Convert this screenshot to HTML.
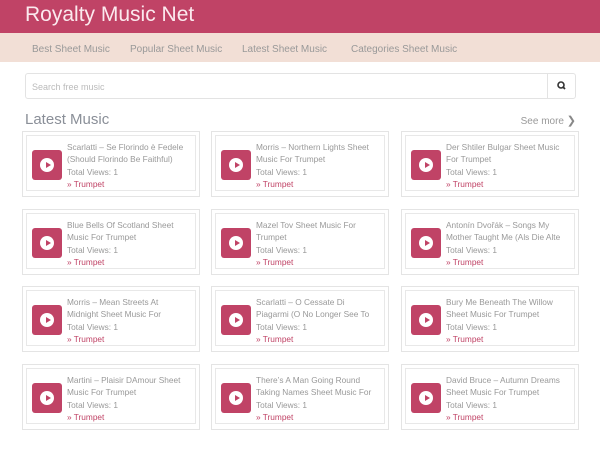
<!DOCTYPE html>
<html><head><meta charset="utf-8"><style>
*{box-sizing:border-box;margin:0;padding:0}
body{width:600px;height:450px;overflow:hidden;background:#fff;font-family:"Liberation Sans",sans-serif;font-weight:300}
.hdr{height:33px;background:#c04366;color:#fbe9ee;font-size:21px;padding:3px 0 0 25px}
.nav{height:29px;background:#f2dfd6;font-size:10px;color:#999;padding-top:11px}
.nav span{position:absolute}
.search{position:absolute;left:25px;top:73px;width:551px;height:26px;border:1px solid #e3e3e3;border-radius:3px;font-size:9px;color:#bbb;padding:8px 6px}
.search .b{position:absolute;right:0;top:0;width:28px;height:24px;border-left:1px solid #e3e3e3}
h2{position:absolute;left:25px;top:111px;font-size:15px;font-weight:normal;color:#8a8f98}
.more{position:absolute;right:24px;top:114px;font-size:10px;color:#999}
.more b{color:#888;font-size:11px}
.card{position:absolute;width:178px;height:66px;border:1px solid #e4e4e4}
.in{position:absolute;left:3px;top:3px;right:3px;bottom:5px;border:1px solid #e8e8e8}
.ic{position:absolute;left:5px;top:14px;width:30px;height:30px;background:#c04366;border-radius:3px}
.ic:after{content:"";position:absolute;left:8px;top:8px;width:14px;height:14px;border-radius:50%;background:#fff}
.ic:before{content:"";position:absolute;left:14px;top:12px;border-left:5px solid #c04366;border-top:3px solid transparent;border-bottom:3px solid transparent;z-index:2}
.t{position:absolute;left:40px;top:5px;width:122px;font-size:8.3px;line-height:12px;color:#999;height:24px;overflow:hidden}
.v{position:absolute;left:40px;top:31px;font-size:8.3px;color:#999}
.k{position:absolute;left:40px;top:43px;font-size:8.3px;color:#c04366}
</style></head><body>
<div class="hdr">Royalty Music Net</div>
<div class="nav"><span style="left:32px">Best Sheet Music</span><span style="left:130px">Popular Sheet Music</span><span style="left:242px">Latest Sheet Music</span><span style="left:351px">Categories Sheet Music</span></div>
<div class="search">Search free music<div class="b"><svg width="28" height="24"><circle cx="13" cy="11" r="3" stroke="#333" stroke-width="1.6" fill="none"/><line x1="15" y1="13" x2="17" y2="15" stroke="#333" stroke-width="1.8"/></svg></div></div>
<h2>Latest Music</h2>
<div class="more">See more <b>&#10095;</b></div>
<div id="g"></div>
<script>
var d=[["Scarlatti – Se Florindo è Fedele (Should Florindo Be Faithful)","Morris – Northern Lights Sheet Music For Trumpet","Der Shtiler Bulgar Sheet Music For Trumpet"],["Blue Bells Of Scotland Sheet Music For Trumpet","Mazel Tov Sheet Music For Trumpet","Antonín Dvořák – Songs My Mother Taught Me (Als Die Alte"],["Morris – Mean Streets At Midnight Sheet Music For","Scarlatti – O Cessate Di Piagarmi (O No Longer See To Pain Me)","Bury Me Beneath The Willow Sheet Music For Trumpet"],["Martini – Plaisir DAmour Sheet Music For Trumpet","There’s A Man Going Round Taking Names Sheet Music For","David Bruce – Autumn Dreams Sheet Music For Trumpet"]];
var xs=[22,211,401],ys=[131,209,286,364],h="";
for(var r=0;r<4;r++)for(var c=0;c<3;c++)h+='<div class="card" style="left:'+xs[c]+'px;top:'+ys[r]+'px"><div class="in"><div class="ic"></div><div class="t">'+d[r][c]+'</div><div class="v">Total Views: 1</div><div class="k">» Trumpet</div></div></div>';
document.getElementById("g").innerHTML=h;
</script>
</body></html>
